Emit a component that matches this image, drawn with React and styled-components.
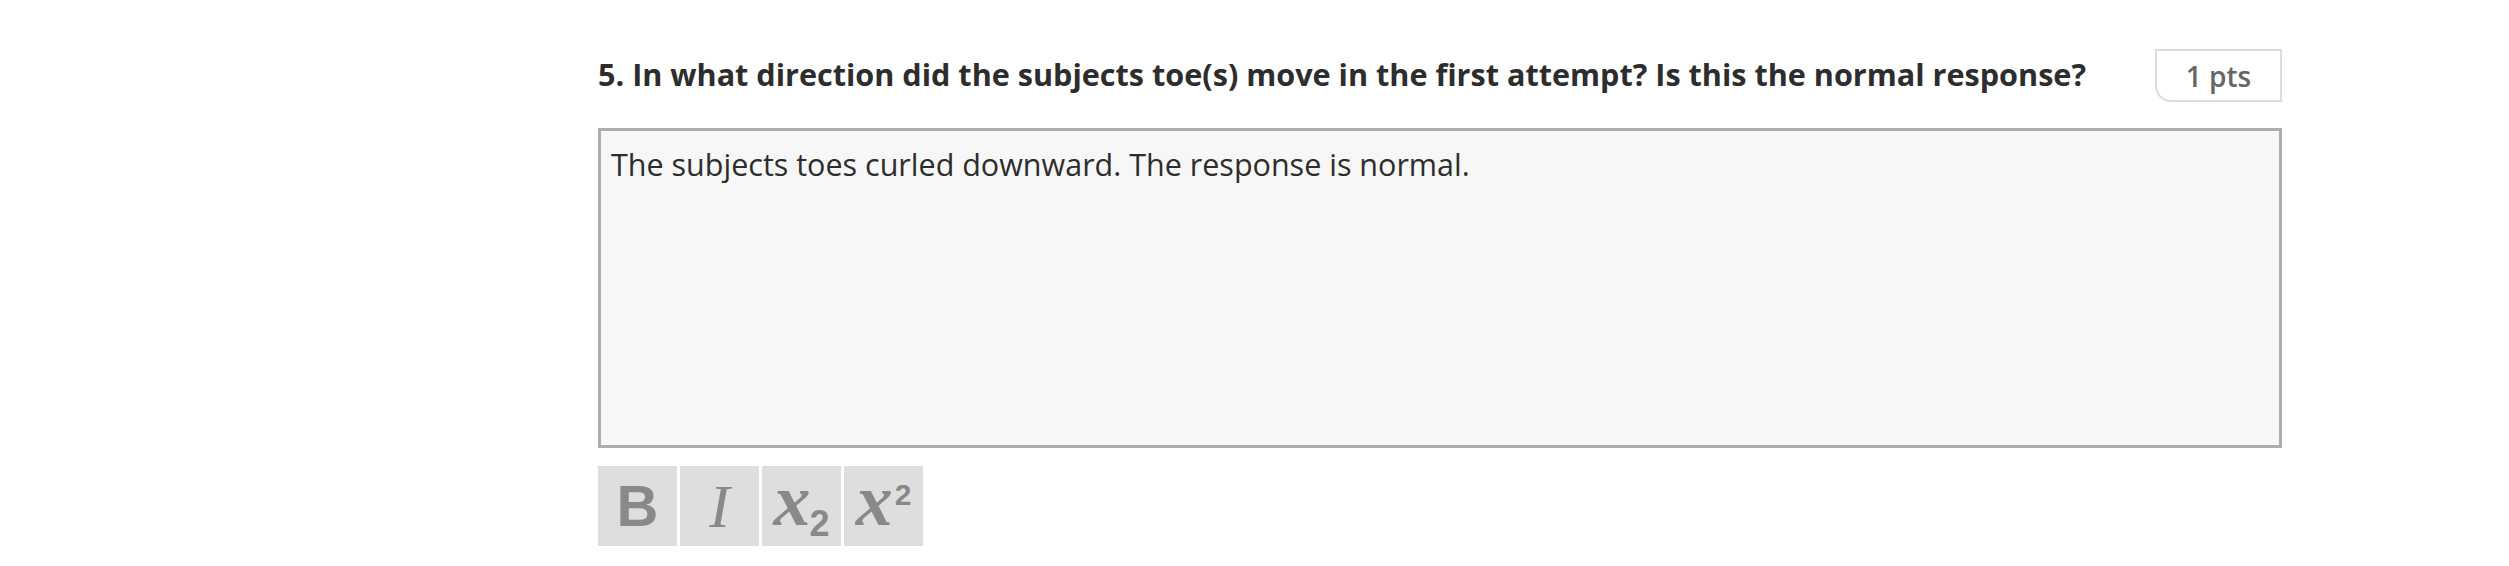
import styled, { createGlobalStyle } from "styled-components";

const GlobalStyle = createGlobalStyle`
  body {
    margin: 0;
    background: #ffffff;
    font-family: "Open Sans", "Liberation Sans", sans-serif;
  }
`;

const Page = styled.div`
  width: 2509px;
  height: 566px;
  padding: 49px 0 0 598px;
  box-sizing: border-box;
`;

const Question = styled.div`
  width: 1684px;
`;

const Header = styled.div`
  display: flex;
  align-items: flex-start;
  justify-content: space-between;
  height: 79px;
`;

const Title = styled.h3`
  margin: 0;
  padding-top: 5px;
  font-size: 30.6px;
  font-weight: 700;
  line-height: 40px;
  color: #2d2d2d;
`;

const Points = styled.div`
  width: 127px;
  height: 53px;
  box-sizing: border-box;
  border: 2px solid #dcdcdc;
  border-radius: 0 0 0 16px;
  display: flex;
  align-items: center;
  justify-content: center;
  font-size: 28px;
  font-weight: 600;
  color: #666666;
`;

const Answer = styled.div`
  height: 320px;
  box-sizing: border-box;
  border: 3px solid #adadad;
  background: #f7f7f7;
  padding: 13px 10px;
  font-size: 30.5px;
  line-height: 40px;
  color: #2d2d2d;
`;

const Toolbar = styled.div`
  display: flex;
  gap: 3px;
  margin-top: 18px;
`;

const ToolButton = styled.div`
  width: 79px;
  height: 80px;
  background: #dedede;
  display: flex;
  align-items: ${(p) => (p.$script ? "flex-start" : "center")};
  justify-content: center;
  color: #898989;
  line-height: 1;
`;

const Bold = styled.span`
  font-family: "Liberation Sans", sans-serif;
  font-size: 58px;
  font-weight: 700;
`;

const Italic = styled.span`
  font-family: "Liberation Serif", serif;
  font-size: 62px;
  font-style: italic;
`;

const Letter = styled.span`
  font-family: "Liberation Serif", serif;
  font-size: 74px;
  line-height: 74px;
  font-style: italic;
  font-weight: 700;
  margin-top: -3px;
`;

const Script = styled.span`
  font-family: "Liberation Sans", sans-serif;
  font-weight: 700;
  font-size: ${(p) => (p.$sup ? "30px" : "36px")};
  line-height: ${(p) => (p.$sup ? "30px" : "36px")};
  margin-top: ${(p) => (p.$sup ? "14px" : "40px")};
  margin-left: ${(p) => (p.$sup ? "2px" : "-1px")};
`;

export default function App() {
  return (
    <>
      <GlobalStyle />
      <Page>
        <Question>
          <Header>
            <Title>
              5. In what direction did the subjects toe(s) move in the first attempt? Is this the normal response?
            </Title>
            <Points>1 pts</Points>
          </Header>
          <Answer>The subjects toes curled downward. The response is normal.</Answer>
          <Toolbar>
            <ToolButton>
              <Bold>B</Bold>
            </ToolButton>
            <ToolButton>
              <Italic>I</Italic>
            </ToolButton>
            <ToolButton $script>
              <Letter>x</Letter>
              <Script>2</Script>
            </ToolButton>
            <ToolButton $script>
              <Letter>x</Letter>
              <Script $sup>2</Script>
            </ToolButton>
          </Toolbar>
        </Question>
      </Page>
    </>
  );
}
